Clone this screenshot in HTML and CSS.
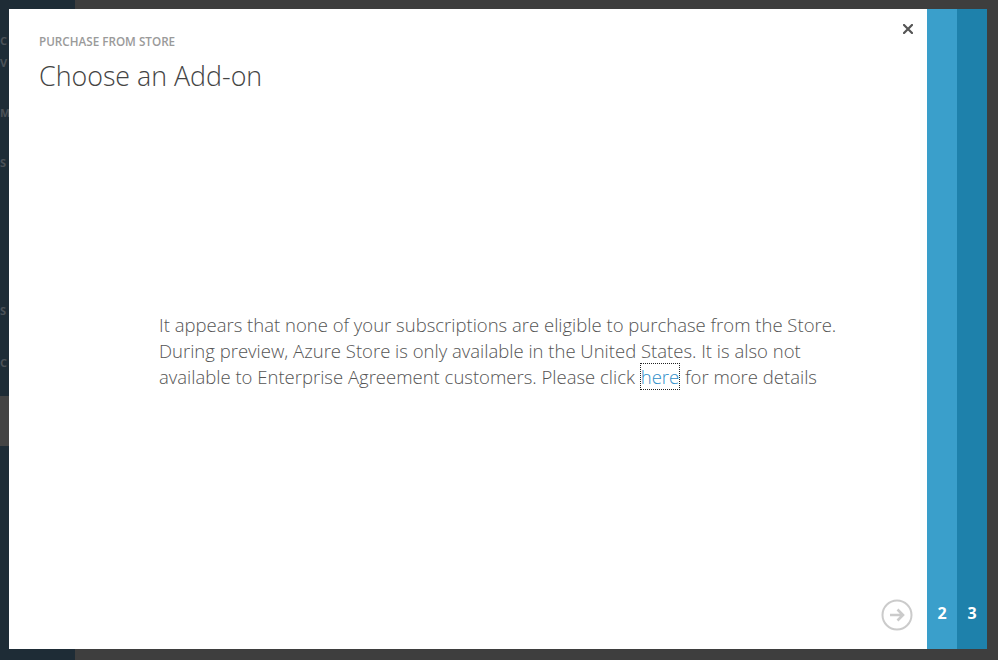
FILE: index.html
```html
<!DOCTYPE html>
<html>
<head>
<meta charset="utf-8">
<link rel="stylesheet" href="styles.css">
</head>
<body>
<div class="app">
  <nav class="sidebar">
    <div class="nav-item n1">C</div>
    <div class="nav-item n2">V</div>
    <div class="nav-item n3">M</div>
    <div class="nav-item n4">S</div>
    <div class="nav-item n5">S</div>
    <div class="nav-item n6">C</div>
    <div class="nav-selected"></div>
  </nav>
  <main class="workspace"></main>
</div>

<div class="dialog">
  <section class="dialog-body">
    <button class="close" aria-label="Close">
      <svg width="10" height="10" viewBox="0 0 10 10"><path d="M1 1 L9 9 M9 1 L1 9" stroke="#555" stroke-width="2.2" stroke-linecap="square"/></svg>
    </button>
    <div class="eyebrow">PURCHASE FROM STORE</div>
    <h1 class="title">Choose an Add-on</h1>
    <p class="message">It appears that none of your subscriptions are eligible to purchase from the Store. During preview, Azure Store is only available in the United States. It is also not available to Enterprise Agreement customers. Please click <a href="#" class="link">here</a> for more details</p>
    <div class="footer">
      <button class="next" aria-label="Next">
        <svg width="32" height="32" viewBox="0 0 32 32"><circle cx="16" cy="16" r="14.5" fill="none" stroke="#cbcbcb" stroke-width="2"/><path d="M9 16 H22 M16.5 10.5 L22 16 L16.5 21.5" fill="none" stroke="#cbcbcb" stroke-width="2.6"/></svg>
      </button>
    </div>
  </section>
  <div class="step step2"><span>2</span></div>
  <div class="step step3"><span>3</span></div>
</div>
</body>
</html>
```
FILE: styles.css
```css
html, body {
  margin: 0;
  padding: 0;
  height: 100%;
}
body {
  background: #3e3e3e;
  font-family: "Open Sans", "Noto Sans", sans-serif;
  overflow: hidden;
}
.app {
  display: flex;
  height: 660px;
}
.sidebar {
  width: 75px;
  background: #1e2c36;
  display: flex;
  flex-direction: column;
}
.nav-item {
  color: #4c5258;
  font-size: 11px;
  font-weight: 700;
  padding-left: 0;
  height: 12px;
  line-height: 12px;
}
.n1 { margin-top: 35px; }
.n2 { margin-top: 10px; }
.n3 { margin-top: 38px; }
.n4 { margin-top: 38px; }
.n5 { margin-top: 136px; }
.n6 { margin-top: 40px; }
.nav-selected {
  margin-top: 27px;
  height: 50px;
  background: #444;
}
.workspace {
  flex: 1;
}
.dialog {
  position: absolute;
  left: 9px;
  top: 9px;
  width: 978px;
  height: 640px;
  display: flex;
}
.dialog-body {
  flex: 1;
  background: #fff;
  position: relative;
  display: flex;
  flex-direction: column;
  padding: 0 0 0 30px;
}
.close {
  position: absolute;
  top: 15px;
  right: 14px;
  border: 0;
  background: none;
  padding: 0;
  width: 10px;
  height: 10px;
  display: flex;
}
.eyebrow {
  margin-top: 25px;
  font-size: 11.7px;
  font-weight: 600;
  color: #9a9a9a;
  line-height: 14px;
}
.title {
  margin: 11px 0 0;
  font-size: 26.8px;
  font-weight: 300;
  color: #444;
  line-height: 34px;
}
.message {
  margin: 219px 0 0 120px;
  width: 684px;
  font-size: 18.5px;
  font-weight: 300;
  line-height: 26px;
  color: #555;
}
.link {
  color: #2f8ec9;
  text-decoration: none;
  outline: 1px dotted #222;
  margin: 0 1px 0 1px;
}
.footer {
  margin-top: auto;
  display: flex;
  justify-content: flex-end;
  padding: 0 14px 18px 0;
}
.next {
  border: 0;
  background: none;
  padding: 0;
  width: 32px;
  height: 32px;
  display: flex;
}
.step {
  width: 30px;
  display: flex;
  align-items: flex-end;
  justify-content: center;
  color: #fff;
  font-size: 16px;
  font-weight: 700;
  padding-bottom: 25px;
  box-sizing: border-box;
}
.step2 { background: #3a9fcb; }
.step3 { background: #1e81ab; }
```
